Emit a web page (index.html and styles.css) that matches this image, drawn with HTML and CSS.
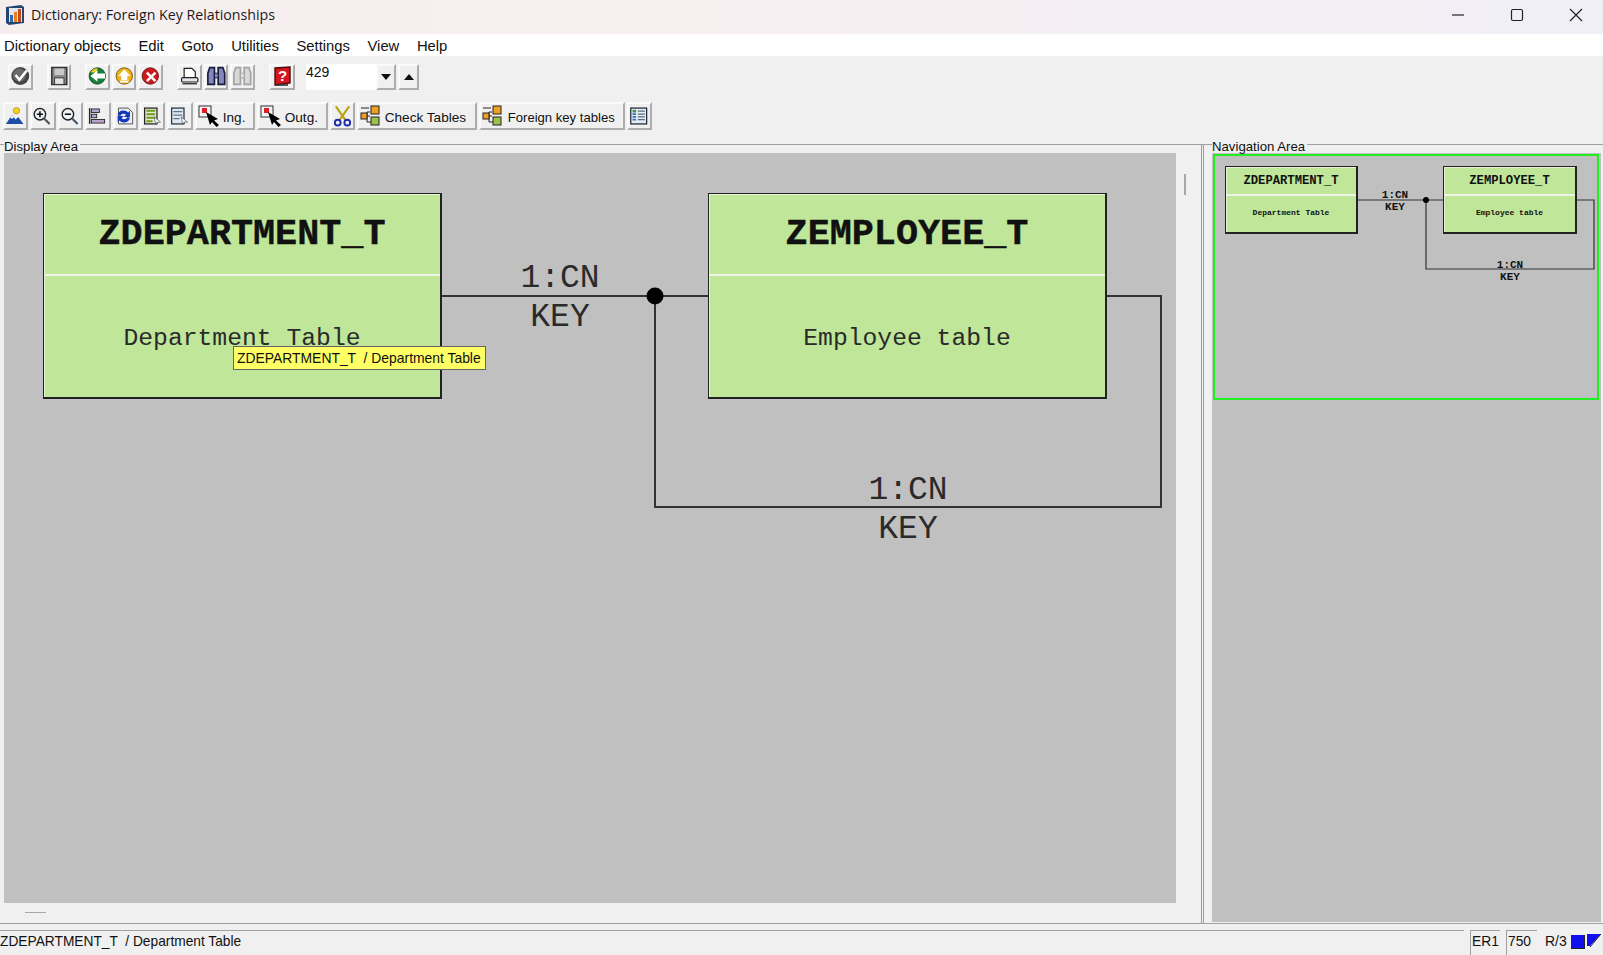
FILE: index.html
```html
<!doctype html>
<html lang="en">
<head>
<meta charset="utf-8">
<title>Dictionary: Foreign Key Relationships</title>
<link rel="stylesheet" href="styles.css">
</head>
<body>
<header class="titlebar">
	<svg class="app-icon" width="22" height="22" viewBox="0 0 22 22">
		<path d="M2 3 L17 1 L20 3 V19 L5 21 L2 19 Z" fill="#24466e"/>
		<rect x="5" y="4" width="13" height="14" fill="#dfe6ee"/>
		<rect x="6" y="11" width="3" height="7" fill="#2b6cb8"/>
		<rect x="10" y="8" width="3" height="10" fill="#e8801c"/>
		<rect x="14" y="5" width="3" height="13" fill="#c8461c"/>
	</svg>
	<span class="title-text">Dictionary: Foreign Key Relationships</span>
	<div class="win-controls">
		<svg width="14" height="14" viewBox="0 0 14 14"><path d="M1 7 H13" stroke="#222" stroke-width="1.2"/></svg>
		<svg width="14" height="14" viewBox="0 0 14 14"><rect x="1.5" y="1.5" width="11" height="11" rx="1.5" fill="none" stroke="#222" stroke-width="1.2"/></svg>
		<svg width="14" height="14" viewBox="0 0 14 14"><path d="M1 1 L13 13 M13 1 L1 13" stroke="#222" stroke-width="1.2"/></svg>
	</div>
</header>

<nav class="menubar">
	<span>Dictionary objects</span>
	<span>Edit</span>
	<span>Goto</span>
	<span>Utilities</span>
	<span>Settings</span>
	<span>View</span>
	<span>Help</span>
</nav>

<div class="toolbar toolbar-std">
	<div class="btn"><svg width="22" height="22" viewBox="0 0 22 22"><circle cx="11" cy="11" r="9.5" fill="#444"/><circle cx="10" cy="10" r="7" fill="#6a6a6a"/><path d="M6 10 L10 15 L18 5" fill="none" stroke="#fff" stroke-width="2.6"/></svg></div>
	<div class="btn sep"><svg width="22" height="22" viewBox="0 0 22 22"><path d="M3 2 H19 V20 H3 Z" fill="#8a8a8a" stroke="#333" stroke-width="1.6"/><rect x="6" y="3" width="10" height="7" fill="#c8c8c8"/><rect x="6" y="13" width="10" height="7" fill="#e4e4e4" stroke="#333"/></svg></div>
	<div class="btn sep"><svg width="24" height="24" viewBox="0 0 24 24"><circle cx="12" cy="12" r="9.5" fill="#16813a" stroke="#1b3c2c"/><path d="M4 8 A9 9 0 0 1 12 3 L12 8 Z" fill="#e8d02a"/><path d="M4 12 L12 5.5 V9 H21 V15 H12 V18.5 Z" fill="#fff"/></svg></div>
	<div class="btn"><svg width="24" height="24" viewBox="0 0 24 24"><circle cx="12" cy="12" r="9.5" fill="#f0b414" stroke="#6b4a10"/><path d="M12 4 L19 12 H15.5 V17 H8.5 V12 H5 Z" fill="#fff"/><path d="M7 18.5 H17" stroke="#fff" stroke-width="2"/></svg></div>
	<div class="btn"><svg width="24" height="24" viewBox="0 0 24 24"><circle cx="12" cy="12" r="9.5" fill="#d0181c" stroke="#5c1010"/><path d="M8 8 L18 18 M18 8 L8 18" stroke="#fff" stroke-width="3"/></svg></div>
	<div class="btn sep"><svg width="24" height="24" viewBox="0 0 24 24"><path d="M6 3 H15 L19 7 V14 H6 Z" fill="#fff" stroke="#222" stroke-width="1.4"/><rect x="3" y="14" width="19" height="5" rx="1.5" fill="#dfe6ee" stroke="#222" stroke-width="1.4"/><path d="M4 21 H21" stroke="#333" stroke-width="1.6"/></svg></div>
	<div class="btn"><svg width="22" height="22" viewBox="0 0 22 22"><path d="M4 2 H9 V20 H2 V8 Z M13 2 H18 L20 8 V20 H13 Z" fill="#8488c0" stroke="#1c1c3c" stroke-width="1.8"/><rect x="9" y="8" width="4" height="5" fill="#8488c0" stroke="#1c1c3c"/></svg></div>
	<div class="btn"><svg width="22" height="22" viewBox="0 0 22 22"><path d="M4 2 H9 V20 H2 V8 Z M13 2 H18 L20 8 V20 H13 Z" fill="#d8d8d8" stroke="#a4a4a4" stroke-width="1.8"/><rect x="9" y="8" width="4" height="5" fill="#e4e4e4" stroke="#a4a4a4"/></svg></div>
	<div class="btn sep help"><svg width="22" height="22" viewBox="0 0 22 22"><path d="M4 3 L19 2 V18 L4 20 Z" fill="#d8141c" stroke="#4c0c10" stroke-width="1.4"/><path d="M4 20 L17 20" stroke="#333" stroke-width="1.6"/><text class="help-mark" x="11.5" y="16">?</text></svg></div>
	<div class="field">429</div>
	<div class="btn spin"><svg width="10" height="6" viewBox="0 0 10 6"><path d="M0 0 H10 L5 6 Z" fill="#111"/></svg></div>
	<div class="btn spin"><svg width="10" height="6" viewBox="0 0 10 6"><path d="M0 6 H10 L5 0 Z" fill="#111"/></svg></div>
</div>

<div class="toolbar toolbar-app">
	<div class="btn"><svg width="22" height="22" viewBox="0 0 22 22"><circle cx="13" cy="5" r="3.6" fill="#f5d020" stroke="#8c7410" stroke-width=".6"/><path d="M1 20 L8 10 L12 15 L15 12 L21 20 Z" fill="#1a4fa8"/><path d="M8 10 L6 13 L8 14 L10 12.6 Z" fill="#fff"/></svg></div>
	<div class="btn"><svg width="22" height="22" viewBox="0 0 22 22"><circle cx="9" cy="9" r="6.5" fill="#eef2f6" stroke="#222" stroke-width="1.6"/><path d="M5.5 9 H12.5 M9 5.5 V12.5" stroke="#111" stroke-width="1.8"/><path d="M14 14 L20 20" stroke="#456" stroke-width="2.4"/></svg></div>
	<div class="btn"><svg width="22" height="22" viewBox="0 0 22 22"><circle cx="9" cy="9" r="6.5" fill="#eef2f6" stroke="#222" stroke-width="1.6"/><path d="M5.5 9 H12.5" stroke="#111" stroke-width="1.8"/><path d="M14 14 L20 20" stroke="#456" stroke-width="2.4"/></svg></div>
	<div class="btn"><svg width="22" height="22" viewBox="0 0 22 22"><path d="M3 2 V20" stroke="#222" stroke-width="1.6"/><rect x="5" y="3" width="9" height="4" fill="#b8a4cc" stroke="#222"/><rect x="5" y="9" width="6" height="4" fill="#b8a4cc" stroke="#222"/><rect x="5" y="15" width="15" height="4" fill="#b8a4cc" stroke="#222"/></svg></div>
	<div class="btn"><svg width="22" height="22" viewBox="0 0 22 22"><path d="M4 2 H15 L20 7 V20 H4 Z" fill="#e8eef4" stroke="#444"/><path d="M3 10 A7 7 0 0 1 15 7 L17 5 V12 H10 L12.5 9.5 A4 4 0 0 0 6 11 Z M17 13 A7 7 0 0 1 5 16 L3 18 V11 H10 L7.5 13.5 A4 4 0 0 0 14 12 Z" fill="#1638b8"/></svg></div>
	<div class="btn"><svg width="22" height="22" viewBox="0 0 22 22"><rect x="3" y="2" width="14" height="18" fill="#e4ecd4" stroke="#222" stroke-width="1.4"/><path d="M5 5 H15 M5 9 H15 M5 13 H15 M5 17 H12" stroke="#6e9a1c" stroke-width="2.2"/><path d="M14 12 L21 18 L17 18 L15.5 21 Z" fill="#fff" stroke="#555" stroke-width=".8"/></svg></div>
	<div class="btn"><svg width="22" height="22" viewBox="0 0 22 22"><rect x="3" y="2" width="14" height="18" fill="#dfe8f0" stroke="#234" stroke-width="1.4"/><path d="M5 6 H15 M5 10 H15 M5 14 H12" stroke="#5c7488" stroke-width="1.6"/><path d="M14 12 L21 18 L17 18 L15.5 21 Z" fill="#fff" stroke="#555" stroke-width=".8"/></svg></div>
	<div class="btn text-btn w-ing"><svg width="22" height="22" viewBox="0 0 22 22"><rect x="1" y="1" width="12" height="11" fill="#f4f4f4" stroke="#333"/><rect x="4" y="3" width="5" height="5" fill="#e01c24"/><path d="M8 7 L20 14 L16 15.5 L21 20 L18.5 22 L14 17 L12 20 Z" fill="#000"/></svg><span>Ing.</span></div>
	<div class="btn text-btn w-outg"><svg width="22" height="22" viewBox="0 0 22 22"><rect x="1" y="1" width="12" height="11" fill="#f4f4f4" stroke="#333"/><rect x="4" y="3" width="5" height="5" fill="#e01c24"/><path d="M8 7 L20 14 L16 15.5 L21 20 L18.5 22 L14 17 L12 20 Z" fill="#000"/></svg><span>Outg.</span></div>
	<div class="btn w-cut"><svg width="22" height="24" viewBox="0 0 22 24"><path d="M4 2 L14 16 M18 2 L8 16" stroke="#b8a410" stroke-width="2.2"/><circle cx="6" cy="19" r="3" fill="none" stroke="#1c2ca8" stroke-width="2"/><circle cx="16" cy="19" r="3" fill="none" stroke="#1c2ca8" stroke-width="2"/></svg></div>
	<div class="btn text-btn w-check"><svg width="22" height="22" viewBox="0 0 22 22"><use href="#tree"/></svg><span>Check Tables</span></div>
	<div class="btn text-btn w-fk"><svg width="22" height="22" viewBox="0 0 22 22"><use href="#tree"/></svg><span>Foreign key tables</span></div>
	<div class="btn"><svg width="22" height="22" viewBox="0 0 22 22"><rect x="2" y="2" width="18" height="18" fill="#e4ecf6" stroke="#223" stroke-width="1.4"/><rect x="4" y="4" width="4" height="3" fill="#3c9a3c"/><path d="M4 9 H8 M4 12 H8 M4 15 H8" stroke="#3a70c0" stroke-width="2"/><path d="M10 5.5 H18 M10 9 H18 M10 12 H18 M10 15 H18" stroke="#5a6a80" stroke-width="1.4"/></svg></div>
</div>

<svg class="defs" width="0" height="0">
	<symbol id="tree" viewBox="0 0 22 22">
		<path d="M1 3 H9 M7 11 V7 H10 M7 11 H10 M7 11 V17 H12" fill="none" stroke="#222"/>
		<rect x="1" y="8" width="6" height="6" fill="#f0a020" stroke="#222"/>
		<rect x="11" y="1" width="8" height="8" fill="#f0a020" stroke="#222"/>
		<rect x="11" y="12" width="8" height="8" fill="#9cc24c" stroke="#222"/>
	</symbol>
</svg>

<main class="workarea">
	<section class="panel panel-display">
		<span class="group-label">Display Area</span>
		<div class="canvas canvas-display">
			<svg class="wires" width="1172" height="750" viewBox="0 0 1172 750">
				<path d="M437 143 H704 M651 143 V354 H1157 V143 H1102" fill="none" stroke="#333" stroke-width="2"/>
				<circle cx="651" cy="143" r="8.5" fill="#000"/>
				<text class="rel-big" x="556" y="134">1:CN</text>
				<text class="rel-big" x="556" y="173">KEY</text>
				<text class="rel-big" x="904" y="346">1:CN</text>
				<text class="rel-big" x="904" y="385">KEY</text>
			</svg>
			<div class="entity entity-big e-dept">
				<div class="entity-head">ZDEPARTMENT_T</div>
				<div class="entity-body">Department Table</div>
			</div>
			<div class="entity entity-big e-emp">
				<div class="entity-head">ZEMPLOYEE_T</div>
				<div class="entity-body">Employee table</div>
			</div>
			<div class="tooltip">ZDEPARTMENT_T &nbsp;/ Department Table</div>
		</div>
		<div class="scroll-h"><i></i></div>
		<div class="scroll-v"><i></i></div>
	</section>
	<section class="panel panel-nav">
		<span class="group-label">Navigation Area</span>
		<div class="canvas canvas-nav">
			<svg class="wires" width="389" height="769" viewBox="0 0 389 769">
				<path d="M145 47 H231 M214 47 V116 H382 V47 H364" fill="none" stroke="#333" stroke-width="1.2"/>
				<circle cx="214" cy="47" r="3" fill="#000"/>
				<text class="rel-small" x="183" y="45">1:CN</text>
				<text class="rel-small" x="183" y="57">KEY</text>
				<text class="rel-small" x="298" y="115">1:CN</text>
				<text class="rel-small" x="298" y="127">KEY</text>
			</svg>
			<div class="viewport"></div>
			<div class="entity entity-small n-dept">
				<div class="entity-head">ZDEPARTMENT_T</div>
				<div class="entity-body">Department Table</div>
			</div>
			<div class="entity entity-small n-emp">
				<div class="entity-head">ZEMPLOYEE_T</div>
				<div class="entity-body">Employee table</div>
			</div>
		</div>
	</section>
</main>

<footer class="statusbar">
	<div class="status-msg">ZDEPARTMENT_T &nbsp;/ Department Table</div>
	<div class="status-cell c-sys">ER1</div>
	<div class="status-cell c-client">750</div>
	<div class="status-r3">R/3</div>
	<div class="r3-square"></div>
	<svg class="r3-flag" width="14" height="14" viewBox="0 0 14 14"><path d="M0 0 H14 L3 12 H0 Z" fill="#1010ee"/><path d="M14 0 L3 13" stroke="#222"/></svg>
</footer>
</body>
</html>
```

FILE: styles.css
```css
* {
	box-sizing: border-box;
}

html, body {
	margin: 0;
	padding: 0;
}

body {
	width: 1603px;
	height: 955px;
	overflow: hidden;
	display: flex;
	flex-direction: column;
	background: #f0f0f0;
	color: #111;
	font-family: "Liberation Sans", Arial, sans-serif;
	font-size: 14px;
}

.titlebar {
	height: 34px;
	flex: none;
	display: flex;
	align-items: center;
	padding: 0 0 5px 4px;
	background: linear-gradient(90deg, #f6eeee 0%, #f8eff0 40%, #f0eff6 100%);
}

.app-icon {
	margin-right: 5px;
}

.title-text {
	font-family: "Open Sans", sans-serif;
	font-size: 14.2px;
	color: #1a1a1a;
}

.win-controls {
	margin-left: auto;
	display: flex;
	gap: 45px;
	padding-right: 20px;
}

.menubar {
	height: 22px;
	flex: none;
	display: flex;
	align-items: center;
	gap: 17.6px;
	padding: 1px 0 0 4px;
	background: #fff;
	font-size: 14.8px;
}

.toolbar {
	display: flex;
	flex: none;
}

.toolbar-std {
	height: 46px;
	padding: 8px 0 0 8px;
	gap: 2px;
}

.toolbar-app {
	height: 42px;
	padding: 0 0 0 3px;
	gap: 2px;
}

.btn {
	width: 25.4px;
	height: 26px;
	flex: none;
	display: flex;
	align-items: center;
	justify-content: center;
	background: #f0f0f0;
	border: 2px solid;
	border-color: #fafafa #adadad #adadad #fafafa;
}

.toolbar-std .btn {
	width: 24.6px;
	padding-bottom: 2px;
}

.toolbar-app .btn {
	height: 28px;
	padding-right: 2px;
}

.btn.sep {
	margin-left: 12px;
}

.toolbar-std .btn.help {
	width: 26px;
}

.help-mark {
	fill: #fff;
	font-family: "Liberation Sans", sans-serif;
	font-size: 15px;
	font-weight: bold;
	text-anchor: middle;
}

.field {
	width: 70px;
	height: 26px;
	margin-left: 9.2px;
	margin-right: -2px;
	background: #fff;
	font-size: 14px;
	line-height: 17px;
}

.toolbar-std .btn.spin {
	width: 20.5px;
	padding-bottom: 0;
}

.toolbar-app .text-btn {
	justify-content: flex-start;
	gap: 3px;
	padding: 0 0 0 1px;
	font-size: 13.6px;
	white-space: nowrap;
}

.text-btn span {
	margin-top: 2px;
}

.toolbar-app .w-ing { width: 60px; }
.toolbar-app .w-outg { width: 71px; }
.toolbar-app .w-cut { width: 25px; padding-right: 0; }
.toolbar-app .w-check { width: 120px; }
.toolbar-app .w-fk { width: 146px; gap: 4px; font-size: 13.1px; }

.defs {
	position: absolute;
}

.workarea {
	height: 779px;
	flex: none;
	display: flex;
	border-top: 1px solid #a0a0a0;
}

.panel {
	position: relative;
	display: flex;
	flex-direction: column;
	align-items: flex-start;
}

.panel-display {
	width: 1204px;
	padding-left: 4px;
	border-right: 3px double #9c9c9c;
}

.panel-nav {
	width: 399px;
	padding-left: 8px;
}

.group-label {
	height: 16px;
	line-height: 19px;
	margin-top: -8px;
	padding-right: 2px;
	font-size: 13.2px;
	background: #f0f0f0;
	position: relative;
	z-index: 1;
}

.canvas {
	position: relative;
	background: #c0c0c0;
}

.canvas-display {
	width: 1172px;
	height: 750px;
}

.canvas-nav {
	width: 389px;
	height: 769px;
}

.scroll-h {
	height: 20px;
	padding: 9px 0 0 21px;
}

.scroll-h i {
	display: block;
	width: 21px;
	height: 1px;
	background: #a8a8a8;
}

.scroll-v {
	position: absolute;
	left: 1184px;
	top: 29px;
}

.scroll-v i {
	display: block;
	width: 2px;
	height: 21px;
	background: #a8a8a8;
}

.wires {
	position: absolute;
	left: 0;
	top: 0;
}

.wires text {
	font-family: "Liberation Mono", monospace;
	text-anchor: middle;
	fill: #111;
}

.wires .rel-big {
	font-size: 33px;
	fill: #2a2a2a;
}

.rel-small {
	font-size: 11px;
	font-weight: bold;
}

.entity {
	position: absolute;
	display: flex;
	flex-direction: column;
	background: #bfe699;
	border: 1px solid #222;
	border-right-width: 2px;
	border-bottom-width: 2px;
	box-shadow: inset 1px 1px 0 #e6f3d8;
	font-family: "Liberation Mono", monospace;
	text-align: center;
}

.entity-head {
	border-bottom: 2px solid;
	border-image: linear-gradient(#9aa890 50%, #eef4e6 50%) 1;
	font-weight: bold;
	display: flex;
	align-items: center;
	justify-content: center;
}

.entity-body {
	flex: 1;
	display: flex;
	align-items: center;
	justify-content: center;
}

.entity-big {
	width: 399px;
	height: 206px;
}

.entity-big .entity-head {
	height: 82px;
	font-size: 36.8px;
	-webkit-text-stroke: 0.4px #111;
}

.entity-big .entity-body {
	padding-top: 2px;
	font-size: 24.7px;
	color: #2a2a2a;
}

.entity-small {
	height: 68px;
}

.entity-small .entity-head {
	height: 29px;
	font-size: 12.2px;
}

.entity-small .entity-body {
	font-size: 8px;
	font-weight: bold;
	padding-bottom: 3px;
}

.e-dept { left: 39px; top: 40px; }
.e-emp { left: 704px; top: 40px; }
.n-dept { left: 13px; top: 13px; width: 133px; }
.n-emp { left: 231px; top: 13px; width: 134px; }

.viewport {
	position: absolute;
	left: 1px;
	top: 1px;
	width: 386px;
	height: 246px;
	border: 2px solid #22ee22;
}

.tooltip {
	position: absolute;
	left: 229px;
	top: 193px;
	width: 253px;
	height: 24px;
	padding-left: 3px;
	line-height: 22px;
	background: #ffff66;
	border: 1px solid #666;
	font-size: 13.9px;
	white-space: nowrap;
}

.statusbar {
	flex: 1;
	position: relative;
	display: flex;
	align-items: flex-start;
	border-top: 1px solid #a0a0a0;
	padding-top: 6px;
}

.status-msg {
	width: 1464px;
	height: 26px;
	border-top: 1px solid #a0a0a0;
	line-height: 21px;
	font-size: 13.75px;
	white-space: nowrap;
}

.status-cell {
	height: 26px;
	border-top: 1px solid #a0a0a0;
	border-left: 1px solid #a0a0a0;
	padding-left: 1px;
	line-height: 21px;
	font-size: 13.8px;
}

.c-sys {
	width: 30px;
	margin-left: 6px;
}

.c-client {
	width: 31px;
	margin-left: 6px;
}

.status-r3 {
	margin-left: 8px;
	line-height: 22px;
	font-size: 14px;
}

.r3-square {
	width: 14px;
	height: 14px;
	margin: 5px 0 0 4px;
	background: #1010ee;
	border-right: 1px solid #222;
	border-bottom: 1px solid #222;
}

.r3-flag {
	margin: 4px 0 0 2px;
}
```
